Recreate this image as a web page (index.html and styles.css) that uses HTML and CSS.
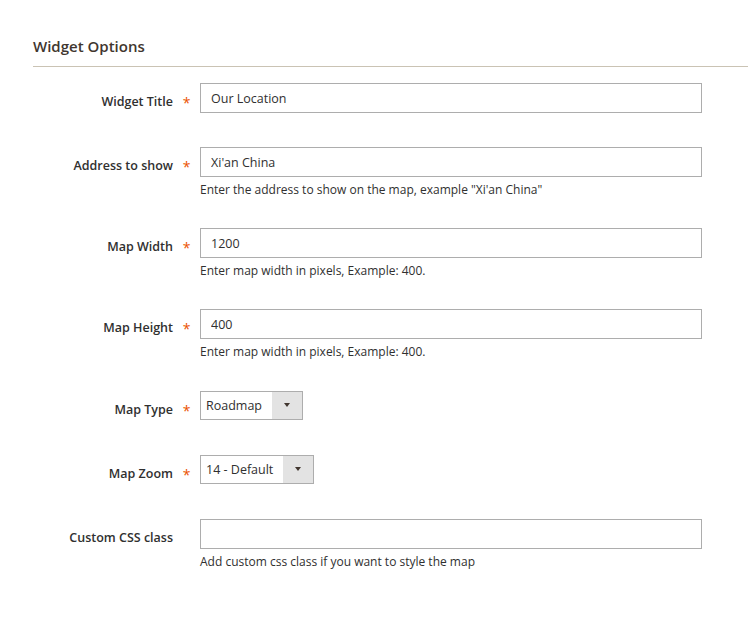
FILE: index.html
```html
<!DOCTYPE html>
<html>
<head>
<meta charset="utf-8">
<link rel="stylesheet" href="styles.css">
</head>
<body>
<div class="page">
  <div class="section-title">Widget Options</div>
  <form class="form">
    <div class="row">
      <label class="label">Widget Title</label>
      <span class="req">*</span>
      <div class="control">
        <input class="input" type="text" value="Our Location">
      </div>
    </div>
    <div class="row row-note">
      <label class="label">Address to show</label>
      <span class="req">*</span>
      <div class="control">
        <input class="input" type="text" value="Xi'an China">
        <div class="note">Enter the address to show on the map, example "Xi'an China"</div>
      </div>
    </div>
    <div class="row row-note">
      <label class="label">Map Width</label>
      <span class="req">*</span>
      <div class="control">
        <input class="input" type="text" value="1200">
        <div class="note">Enter map width in pixels, Example: 400.</div>
      </div>
    </div>
    <div class="row row-note">
      <label class="label">Map Height</label>
      <span class="req">*</span>
      <div class="control">
        <input class="input" type="text" value="400">
        <div class="note">Enter map width in pixels, Example: 400.</div>
      </div>
    </div>
    <div class="row row-select">
      <label class="label">Map Type</label>
      <span class="req">*</span>
      <div class="control">
        <div class="select select-type"><span class="select-value">Roadmap</span><span class="select-arrow"></span></div>
      </div>
    </div>
    <div class="row row-select">
      <label class="label">Map Zoom</label>
      <span class="req">*</span>
      <div class="control">
        <div class="select select-zoom"><span class="select-value">14 - Default</span><span class="select-arrow"></span></div>
      </div>
    </div>
    <div class="row row-note">
      <label class="label">Custom CSS class</label>
      <span class="req"></span>
      <div class="control">
        <input class="input" type="text" value="">
        <div class="note">Add custom css class if you want to style the map</div>
      </div>
    </div>
  </form>
</div>
</body>
</html>
```

FILE: styles.css
```css
html, body {
  margin: 0;
  padding: 0;
  background: #ffffff;
}
body {
  font-family: "Open Sans", "DejaVu Sans", sans-serif;
  color: #303030;
}
.page {
  padding-top: 36px;
}
.section-title {
  margin-left: 33px;
  font-size: 15px;
  line-height: 20px;
  font-weight: 600;
  color: #41362f;
  padding-bottom: 10px;
  border-bottom: 1px solid #cac3b4;
}
.form {
  padding-top: 16px;
}
.row {
  display: grid;
  grid-template-columns: 173px 27px 502px;
  margin-bottom: 34px;
}
.row-note {
  margin-bottom: 30px;
}
.row-select {
  margin-bottom: 35px;
}
.row-note + .row-select {
  padding-top: 1px;
}
.label {
  text-align: right;
  font-size: 12.5px;
  font-weight: 600;
  color: #303030;
  padding-top: 10px;
  line-height: 18px;
}
.req {
  color: #eb5202;
  font-size: 14px;
  padding-top: 11px;
  line-height: 18px;
  text-align: center;
}
.control {
  display: flex;
  flex-direction: column;
}
.input {
  box-sizing: border-box;
  width: 502px;
  height: 30px;
  border: 1px solid #adadad;
  padding: 0 10px;
  margin: 0;
  font-family: "Open Sans", "DejaVu Sans", sans-serif;
  font-size: 12.5px;
  color: #303030;
  outline: none;
  border-radius: 0;
}
.note {
  font-size: 12px;
  line-height: 17px;
  margin-top: 4px;
  color: #303030;
}
.select {
  box-sizing: border-box;
  height: 29px;
  border: 1px solid #adadad;
  display: flex;
  align-items: stretch;
  font-size: 12.5px;
}
.select-type { width: 103px; }
.select-zoom { width: 114px; }
.select-value {
  flex: 1;
  padding-left: 5px;
  line-height: 28px;
}
.select-arrow {
  width: 30px;
  background: #e3e3e3;
  position: relative;
}
.select-arrow::after {
  content: "";
  position: absolute;
  left: 12px;
  top: 11px;
  border-left: 3.5px solid transparent;
  border-right: 3.5px solid transparent;
  border-top: 4px solid #41362f;
}
```
